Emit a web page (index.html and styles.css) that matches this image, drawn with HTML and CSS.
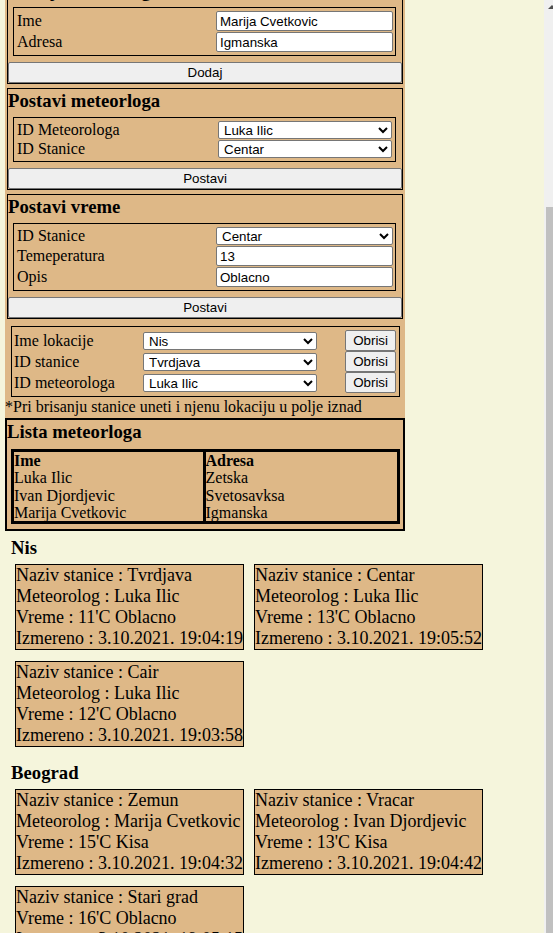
FILE: index.html
```html
<!DOCTYPE html>
<html lang="sr">
<head>
<meta charset="utf-8">
<title>Meteoroloske stanice</title>
<link rel="stylesheet" href="styles.css">
</head>
<body>
<div class="panel">
  <form class="box" id="dodaj-meteorologa">
    <h3 class="box-title">Dodaj meteorologa</h3>
    <div class="fields">
      <label class="lbl">Ime</label><input class="ctl" type="text" value="Marija Cvetkovic">
      <label class="lbl">Adresa</label><input class="ctl" type="text" value="Igmanska">
    </div>
    <button type="button" class="wide-btn">Dodaj</button>
  </form>

  <form class="box">
    <h3 class="box-title">Postavi meteorloga</h3>
    <div class="fields">
      <label class="lbl">ID Meteorologa</label>
      <select class="ctl sel narrow"><option>Luka Ilic</option><option>Ivan Djordjevic</option><option>Marija Cvetkovic</option></select>
      <label class="lbl">ID Stanice</label>
      <select class="ctl sel narrow"><option>Centar</option><option>Tvrdjava</option><option>Cair</option></select>
    </div>
    <button type="button" class="wide-btn">Postavi</button>
  </form>

  <form class="box">
    <h3 class="box-title">Postavi vreme</h3>
    <div class="fields">
      <label class="lbl">ID Stanice</label>
      <select class="ctl sel"><option>Centar</option><option>Tvrdjava</option><option>Cair</option></select>
      <label class="lbl">Temeperatura</label><input class="ctl" type="text" value="13">
      <label class="lbl">Opis</label><input class="ctl" type="text" value="Oblacno">
    </div>
    <button type="button" class="wide-btn">Postavi</button>
  </form>

  <div class="delete">
    <div class="del-grid">
      <span class="lbl">Ime lokacije</span>
      <select class="del-sel"><option>Nis</option><option>Beograd</option></select>
      <button type="button" class="del-btn">Obrisi</button>
      <span class="lbl">ID stanice</span>
      <select class="del-sel"><option>Tvrdjava</option><option>Centar</option><option>Cair</option></select>
      <button type="button" class="del-btn">Obrisi</button>
      <span class="lbl">ID meteorologa</span>
      <select class="del-sel"><option>Luka Ilic</option><option>Ivan Djordjevic</option></select>
      <button type="button" class="del-btn">Obrisi</button>
    </div>
    <p class="note">*Pri brisanju stanice uneti i njenu lokaciju u polje iznad</p>
  </div>

  <div class="lista">
    <h3 class="box-title">Lista meteorloga</h3>
    <div class="list-table">
      <div class="list-col first">
        <div class="head">Ime</div>
        <div>Luka Ilic</div>
        <div>Ivan Djordjevic</div>
        <div>Marija Cvetkovic</div>
      </div>
      <div class="list-col">
        <div class="head">Adresa</div>
        <div>Zetska</div>
        <div>Svetosavksa</div>
        <div>Igmanska</div>
      </div>
    </div>
  </div>
</div>

<section class="city">
  <h3 class="city-title">Nis</h3>
  <div class="cards">
    <div class="card">
      <div>Naziv stanice : Tvrdjava</div>
      <div>Meteorolog : Luka Ilic</div>
      <div>Vreme : 11'C Oblacno</div>
      <div>Izmereno : 3.10.2021. 19:04:19</div>
    </div>
    <div class="card">
      <div>Naziv stanice : Centar</div>
      <div>Meteorolog : Luka Ilic</div>
      <div>Vreme : 13'C Oblacno</div>
      <div>Izmereno : 3.10.2021. 19:05:52</div>
    </div>
    <div class="card">
      <div>Naziv stanice : Cair</div>
      <div>Meteorolog : Luka Ilic</div>
      <div>Vreme : 12'C Oblacno</div>
      <div>Izmereno : 3.10.2021. 19:03:58</div>
    </div>
  </div>
</section>

<section class="city">
  <h3 class="city-title">Beograd</h3>
  <div class="cards">
    <div class="card">
      <div>Naziv stanice : Zemun</div>
      <div>Meteorolog : Marija Cvetkovic</div>
      <div>Vreme : 15'C Kisa</div>
      <div>Izmereno : 3.10.2021. 19:04:32</div>
    </div>
    <div class="card">
      <div>Naziv stanice : Vracar</div>
      <div>Meteorolog : Ivan Djordjevic</div>
      <div>Vreme : 13'C Kisa</div>
      <div>Izmereno : 3.10.2021. 19:04:42</div>
    </div>
    <div class="card">
      <div>Naziv stanice : Stari grad</div>
      <div>Vreme : 16'C Oblacno</div>
      <div>Izmereno : 3.10.2021. 19:05:15</div>
    </div>
  </div>
</section>

<div class="scrollbar" aria-hidden="true">
  <div class="scroll-up"></div>
  <div class="scroll-thumb"></div>
</div>
<script src="script.js"></script>
</body>
</html>
```

FILE: styles.css
```css
html {
  background: #f5f5dc;
}

body {
  margin: 0;
  font-family: "Liberation Serif", "Times New Roman", serif;
  font-size: 16px;
  color: #000;
  background: #f5f5dc;
}

.panel {
  width: 400px;
  margin-left: 5px;
  background: #deb887;
}

.box {
  margin: 0 2px 4px;
  border: 1px solid #000;
}

.box-title {
  margin: 0;
  padding-top: 1px;
  font-size: 18.72px;
  font-weight: bold;
  line-height: normal;
}

.fields {
  margin: 5px 6px 6px 5px;
  border: 1px solid #000;
  padding: 3px 2px 3px 3px;
  display: grid;
  grid-template-columns: 1fr 177px;
  row-gap: 1px;
  align-items: center;
}

.lbl {
  line-height: normal;
}

.ctl {
  box-sizing: border-box;
  width: 177px;
  height: 20px;
  margin: 0;
  padding: 1px 3px;
  font: 13.33px "Liberation Sans", Arial, sans-serif;
  color: #000;
  background: #fff;
  border: 1px solid #767676;
  border-radius: 2px;
}

.sel {
  height: 18px;
  padding: 0 0 0 1px;
}

.sel.narrow {
  width: 174px;
  margin-right: 1px;
  justify-self: end;
}

.wide-btn {
  display: block;
  width: 100%;
  height: 21px;
  margin: 0;
  padding: 0;
  font: 13.33px "Liberation Sans", Arial, sans-serif;
  color: #000;
  background: #efefef;
  border: 1px solid #767676;
  border-radius: 2px;
}

.delete {
  padding-top: 3px;
}

.del-grid {
  margin: 0 5px 0 6px;
  border: 1px solid #000;
  padding: 3px 3px 3px 2px;
  display: grid;
  grid-template-columns: 129px 174px 1fr;
  align-items: center;
}

.del-sel {
  box-sizing: border-box;
  width: 174px;
  height: 18px;
  margin: 0;
  padding: 0 0 0 1px;
  font: 13.33px "Liberation Sans", Arial, sans-serif;
  color: #000;
  background: #fff;
  border: 1px solid #767676;
  border-radius: 2px;
}

.del-btn {
  justify-self: end;
  height: 21px;
  margin: 0;
  padding: 0 7px;
  font: 13.33px "Liberation Sans", Arial, sans-serif;
  color: #000;
  background: #efefef;
  border: 1px solid #767676;
  border-radius: 2px;
}

.note {
  margin: 1px 0 0;
  line-height: normal;
}

.lista {
  margin-top: 2px;
  border: 2px solid #000;
}

.list-table {
  margin: 6px 3px 5px 4px;
  border: 3px solid #000;
  display: grid;
  grid-template-columns: 1fr 1fr;
  line-height: 17.3px;
}

.list-col.first {
  border-right: 3px solid #000;
}

.head {
  font-weight: bold;
}

.city-title {
  margin: 6px 0 5px 11px;
  font-size: 18.72px;
  font-weight: bold;
  line-height: normal;
}

.cards {
  display: flex;
  flex-wrap: wrap;
  align-items: flex-start;
  gap: 11px 10px;
  padding-left: 15px;
  margin-bottom: 15px;
}

.card {
  border: 1px solid #000;
  background: #deb887;
  font-size: 18px;
  line-height: normal;
  white-space: nowrap;
}

/* window scrollbar as seen in the screenshot */
.scrollbar {
  position: fixed;
  top: 0;
  right: 0;
  bottom: 0;
  width: 9px;
  background: #f0f0f0;
  overflow: hidden;
}

.scroll-up {
  position: absolute;
  top: 5px;
  left: 4px;
  width: 0;
  height: 0;
  border-left: 4px solid transparent;
  border-right: 4px solid transparent;
  border-bottom: 4px solid #505050;
}

.scroll-thumb {
  position: absolute;
  top: 207px;
  left: 2px;
  right: 0;
  bottom: 0;
  background: #c0c0c0;
}
```

FILE: script.js
```js
(function () {
  function place() {
    var fields = document.querySelector('#dodaj-meteorologa .fields');
    if (!fields) return;
    var top = fields.getBoundingClientRect().top + window.scrollY - 7;
    window.scrollTo(0, top);
  }
  place();
  window.addEventListener('load', place);
})();
```
